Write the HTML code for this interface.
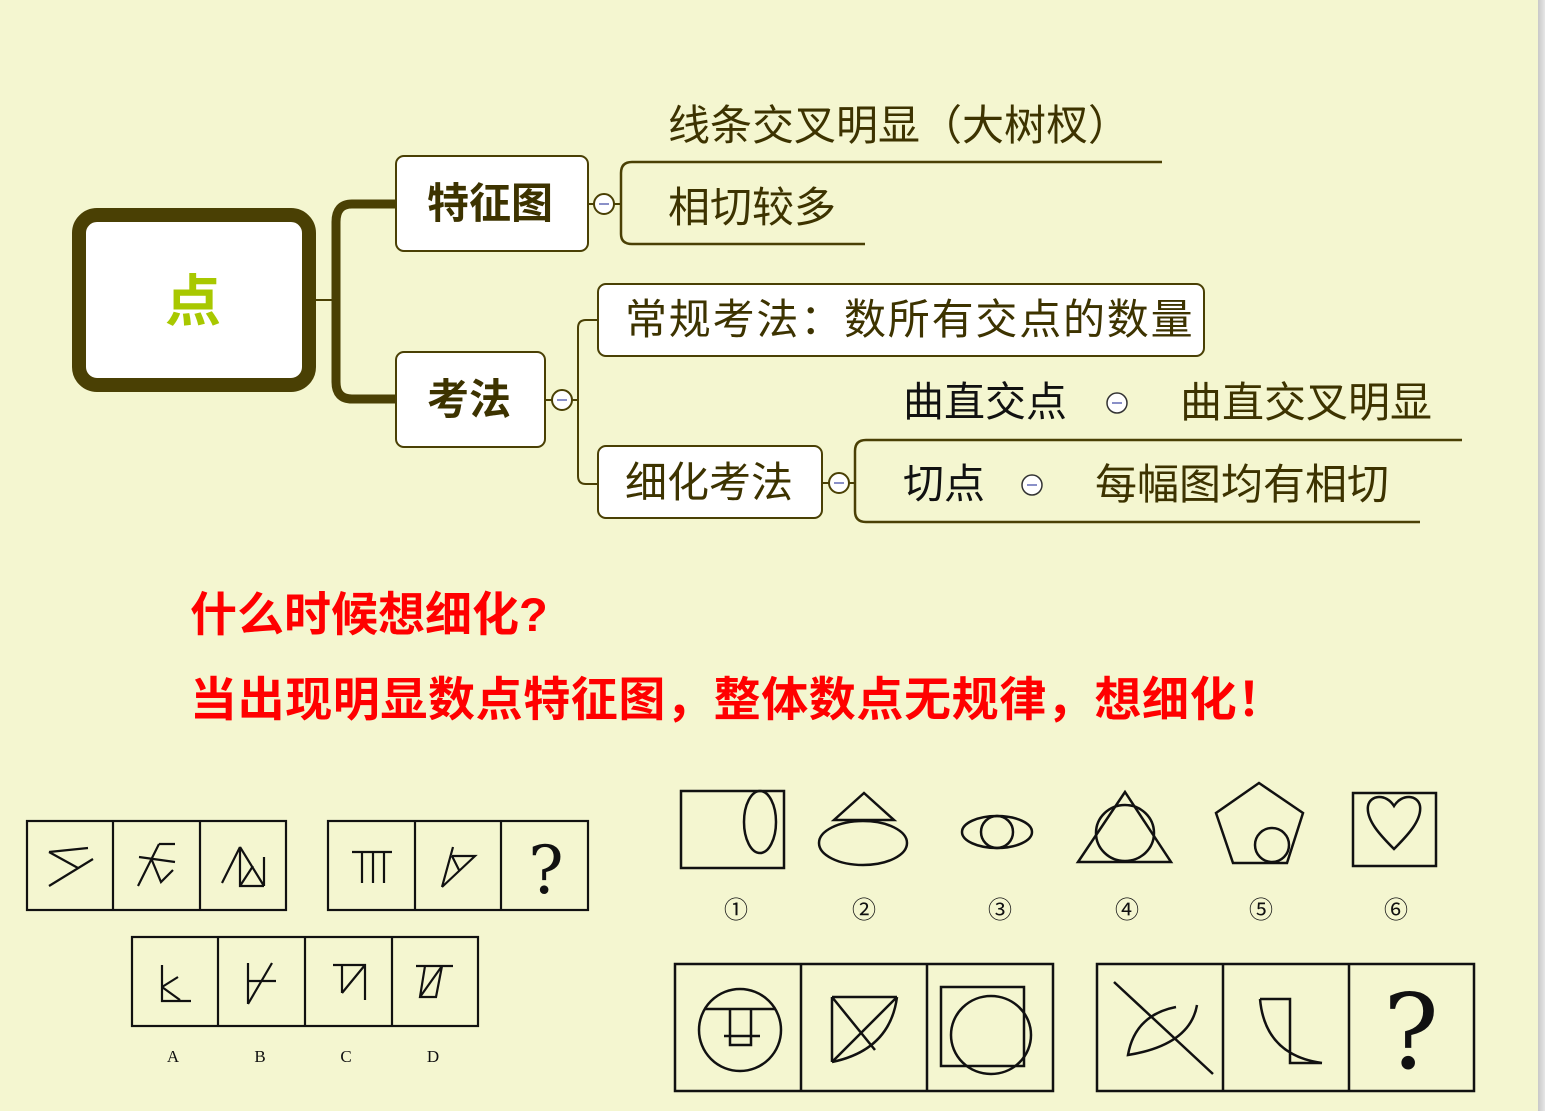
<!DOCTYPE html>
<html><head><meta charset="utf-8"><style>
html,body{margin:0;padding:0}
body{width:1545px;height:1111px;background:#f4f6d0;position:relative;overflow:hidden;font-family:"Liberation Sans","Noto Sans CJK SC",sans-serif}
.t{position:absolute;white-space:nowrap;line-height:1;color:#3d3300;font-family:"Liberation Sans","Noto Sans CJK SC",sans-serif;font-size:42px}
.b{font-weight:bold}
.r{color:#ff0000;font-weight:bold;font-size:47px}
.box{position:absolute;background:#fff;border:2px solid #4a4004;border-radius:9px;box-sizing:border-box}
.strip{position:absolute;right:0;top:0;width:7px;height:1111px;background:linear-gradient(90deg,#c8c8c8,#e6e6e6)}
</style></head><body>
<svg width="1545" height="1111" style="position:absolute;left:0;top:0">
<g fill="none" stroke="#4a4004">
<line x1="316" y1="300" x2="336" y2="300" stroke-width="2"/>
<path d="M396,204 H352 Q336,204 336,222 V382 Q336,399 352,399 H396" stroke-width="9"/>
<line x1="545" y1="400" x2="578" y2="400" stroke-width="2"/>
<path d="M598,320 H586 Q578,320 578,328 V476 Q578,484 586,484 H598" stroke-width="2"/>
<line x1="588" y1="204" x2="620" y2="204" stroke-width="2"/>
<line x1="822" y1="483" x2="855" y2="483" stroke-width="2"/>
<path d="M1162,162 H632 Q621,162 621,173 V234 Q621,244 632,244 H865" stroke-width="2.5"/>
<path d="M1462,440 H866 Q855,440 855,451 V511 Q855,522 866,522 H1420" stroke-width="2.5"/>
</g>
<rect x="79" y="215" width="230" height="170" rx="18" fill="#fff" stroke="#4a4004" stroke-width="14"/>
<g fill="#fff" stroke="#4a4004" stroke-width="2">
<circle cx="604" cy="204" r="10"/><circle cx="562" cy="400" r="10"/><circle cx="839" cy="483" r="10"/>
<circle cx="1117" cy="403" r="10" stroke="#333" stroke-width="1.5"/><circle cx="1032" cy="485" r="10" stroke="#333" stroke-width="1.5"/>
</g>
<g stroke="#8a90c8" stroke-width="2">
<line x1="599" y1="204" x2="609" y2="204"/><line x1="557" y1="400" x2="567" y2="400"/><line x1="834" y1="483" x2="844" y2="483"/>
<line x1="1112" y1="403" x2="1122" y2="403"/><line x1="1027" y1="485" x2="1037" y2="485"/>
</g>

<g fill="none" stroke="#111" stroke-width="2.2">
<rect x="27" y="821" width="259" height="89"/><line x1="113" y1="821" x2="113" y2="910"/><line x1="200" y1="821" x2="200" y2="910"/>
<rect x="328" y="821" width="260" height="89"/><line x1="415" y1="821" x2="415" y2="910"/><line x1="501" y1="821" x2="501" y2="910"/>
<rect x="132" y="937" width="346" height="89"/><line x1="218" y1="937" x2="218" y2="1026"/><line x1="305" y1="937" x2="305" y2="1026"/><line x1="392" y1="937" x2="392" y2="1026"/>
<path d="M49,852 L88,848 M49,852 L78,868 M93,859 L49,886"/>
<path d="M159,844 L175,844 M159,844 L138,886 M139,857 L175,862 M151,858 L161,882 L173,870"/>
<path d="M240,847 L222,883 M240,847 L264,886 M240,847 V886 H264 M264,857 V886 M240,886 L253,866"/>
<path d="M352,852 H392 M362,852 V883 M373,852 V883 M384,852 V883"/>
<path d="M453,847 L442,887 M452,856 H475 L442,887 M452,856 L459,870"/>
<path d="M162,965 V1001 H191 M162,987 L178,977 M162,987 L180,1000"/>
<path d="M248,963 V1004 M248,981 H276 M272,963 L248,1004"/>
<path d="M333,965 H365 V1000 M365,965 L342,993 M342,965 V993"/>
<path d="M416,966 H453 M425,966 L420,997 H436 L442,966 M442,966 L420,997"/>
</g>
<text x="546" y="893" font-family="DejaVu Serif,serif" font-size="66" text-anchor="middle" fill="#111">?</text>
<g font-family="Liberation Serif,serif" font-size="17" fill="#111" text-anchor="middle">
<text x="173" y="1062">A</text><text x="260" y="1062">B</text><text x="346" y="1062">C</text><text x="433" y="1062">D</text>
</g>

<g fill="none" stroke="#111" stroke-width="2.5">
<rect x="681" y="791" width="103" height="77"/><ellipse cx="760" cy="822" rx="16" ry="31"/>
<path d="M864,793 L834,820 H894 Z"/><ellipse cx="863" cy="843" rx="44" ry="22"/>
<ellipse cx="997" cy="832" rx="35" ry="16"/><ellipse cx="997" cy="832" rx="16" ry="16"/>
<path d="M1125,792 L1078,862 H1171 Z"/><ellipse cx="1125" cy="833" rx="29" ry="28"/>
<path d="M1259,783 L1303,813 L1287,863 H1233 L1216,813 Z"/><ellipse cx="1272" cy="845" rx="17" ry="17"/>
<rect x="1353" y="793" width="83" height="73"/>
<path d="M1394,849 C1380,835 1366,820 1368,806 C1370,795 1386,793 1394,806 C1402,793 1418,795 1420,806 C1422,820 1408,835 1394,849 Z"/>
<rect x="675" y="964" width="378" height="127"/><line x1="801" y1="964" x2="801" y2="1091"/><line x1="927" y1="964" x2="927" y2="1091"/>
<rect x="1097" y="964" width="377" height="127"/><line x1="1223" y1="964" x2="1223" y2="1091"/><line x1="1349" y1="964" x2="1349" y2="1091"/>
<ellipse cx="740" cy="1030" rx="41" ry="41"/><path d="M704,1009 H776 M730,1009 V1045 H751 V1009 M724,1036 H760"/>
<path d="M832,997 H897 M832,997 V1062 M832,997 L875,1050 M897,997 L832,1062 M897,997 Q890,1050 832,1062"/>
<rect x="941" y="987" width="83" height="79"/><ellipse cx="991" cy="1035" rx="40" ry="39"/>
<path d="M1114,982 L1213,1074 M1176,1007 Q1135,1015 1128,1055 Q1190,1045 1197,1005"/>
<path d="M1260,999 H1290 V1063 H1322 M1260,999 Q1265,1055 1322,1063"/>
</g>
<text x="1411" y="1068" font-family="DejaVu Serif,serif" font-size="104" text-anchor="middle" fill="#111">?</text>
<g font-family="Liberation Serif,'Noto Sans CJK SC',serif" font-size="24" fill="#111" text-anchor="middle">
<text x="736" y="918">①</text><text x="864" y="918">②</text><text x="1000" y="918">③</text><text x="1127" y="918">④</text><text x="1261" y="918">⑤</text><text x="1396" y="918">⑥</text>
</g>
</svg>

<div class="t b" style="left:165px;top:274px;font-size:56px;color:#a8c800">点</div>

<div class="box" style="left:395px;top:155px;width:194px;height:97px"></div>
<div class="t b" style="left:427px;top:183px">特征图</div>
<div class="box" style="left:395px;top:351px;width:151px;height:97px"></div>
<div class="t b" style="left:427px;top:379px">考法</div>

<div class="t" style="left:668px;top:105px;letter-spacing:0px">线条交叉明显（大树杈）</div>
<div class="t" style="left:668px;top:187px">相切较多</div>

<div class="box" style="left:597px;top:283px;width:608px;height:74px"></div>
<div class="t" style="left:625px;top:299px;letter-spacing:1.8px">常规考法：数所有交点的数量</div>
<div class="box" style="left:597px;top:445px;width:226px;height:74px"></div>
<div class="t" style="left:625px;top:462px">细化考法</div>

<div class="t" style="left:903px;top:382px;color:#111;font-size:41px">曲直交点</div>
<div class="t" style="left:1180px;top:382px">曲直交叉明显</div>
<div class="t" style="left:903px;top:464px;color:#111;font-size:41px">切点</div>
<div class="t" style="left:1095px;top:464px">每幅图均有相切</div>

<div class="t r" style="left:190px;top:591px">什么时候想细化?</div>
<div class="t r" style="left:190px;top:676px;letter-spacing:0.6px">当出现明显数点特征图，整体数点无规律，想细化！</div>

<div class="strip"></div>
</body></html>
